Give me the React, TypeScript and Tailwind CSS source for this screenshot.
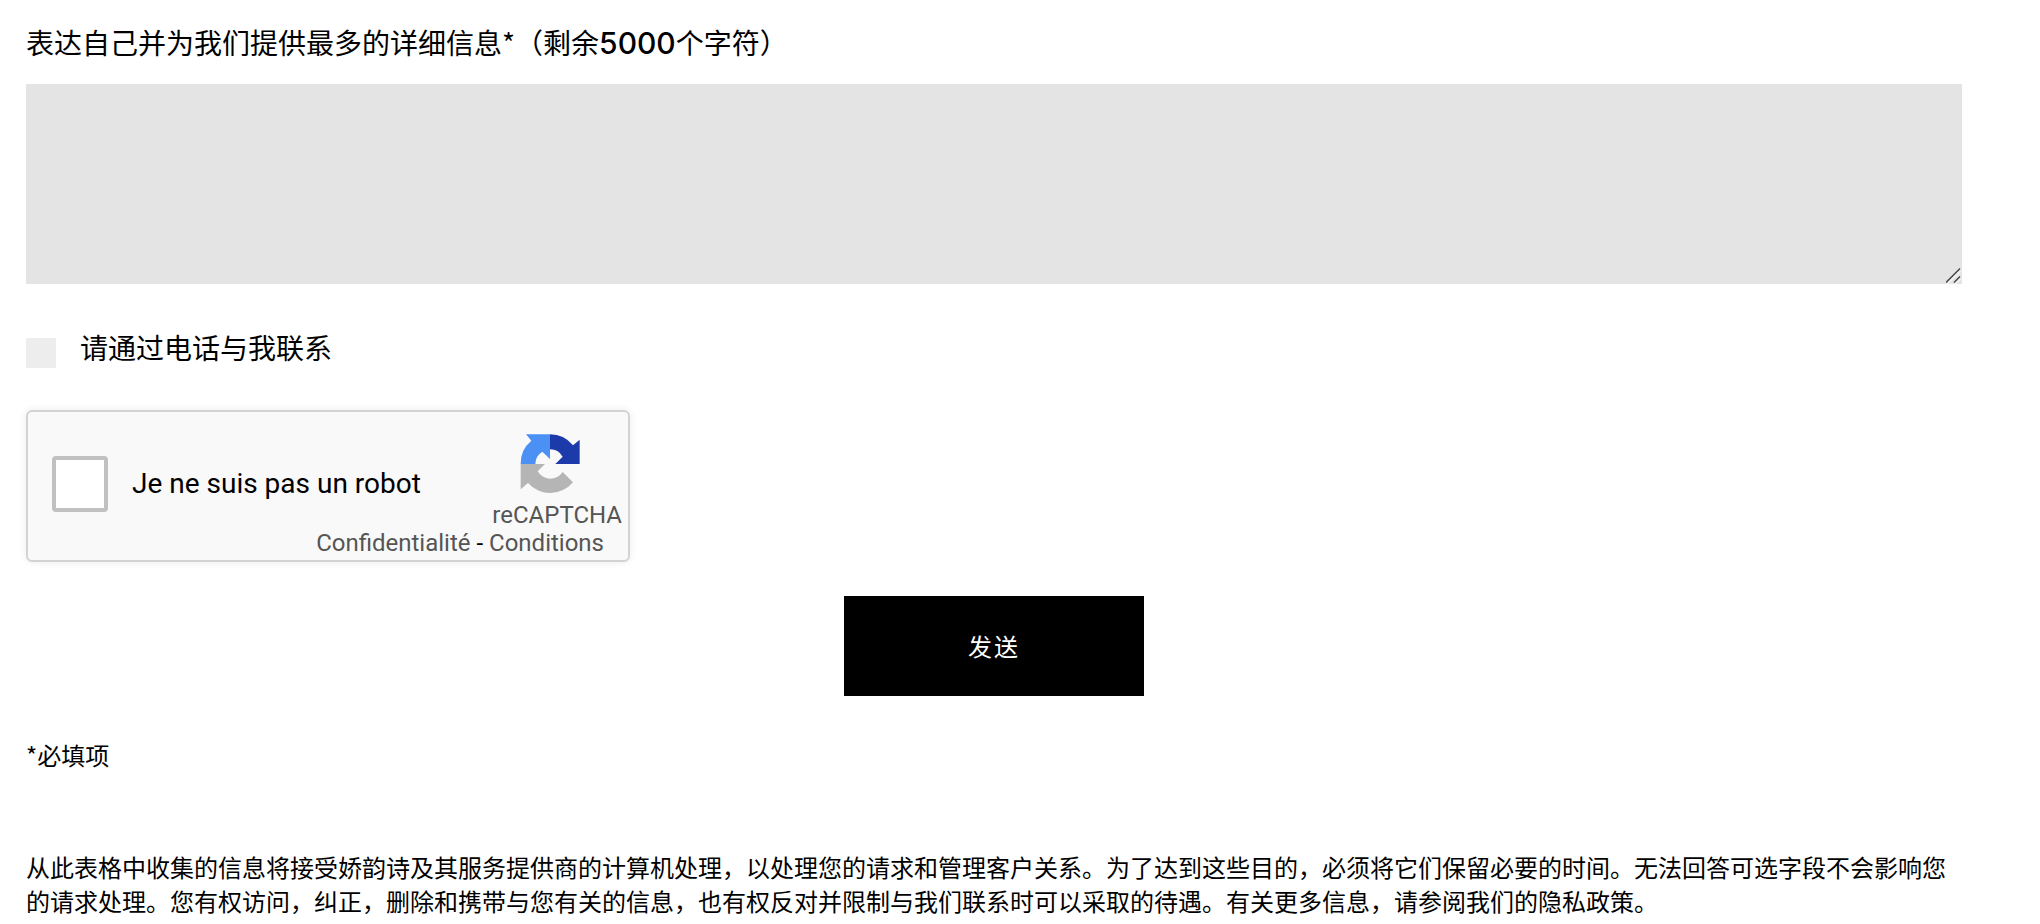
import React from 'react';

const RecaptchaLogo: React.FC = () => (
  <svg viewBox="0 0 180 180" className="w-[60px] h-[60px]" aria-hidden="true">
    <path d="M18 1H90V75L67 53A44 44 0 0 0 46 90H2A88 88 0 0 1 34 20Z" fill="#4a90f5" />
    <path d="M90 1A89 89 0 0 1 159 34L179 17V90H106L128 68A44 44 0 0 0 90 46Z" fill="#1c3aa9" />
    <path d="M2 90H75L53 112A44 44 0 0 0 128 114L159 145A89 89 0 0 1 24 147L2 166Z" fill="#b5b5b5" />
  </svg>
);

const Recaptcha: React.FC = () => (
  <div className="flex justify-between w-[604px] h-[152px] mt-[42px] pl-6 bg-[#f9f9f9] border-2 border-[#d3d3d3] rounded-md shadow-[0_0_8px_rgba(0,0,0,0.08)] font-[Roboto,sans-serif]">
    <div className="flex items-center gap-6 shrink-0 pb-1">
      <input
        id="robot"
        type="checkbox"
        className="appearance-none w-14 h-14 bg-white border-4 border-[#c1c1c1] rounded"
      />
      <label htmlFor="robot" className="text-[28px] leading-[34px] whitespace-nowrap">
        Je ne suis pas un robot
      </label>
    </div>
    <div className="flex flex-col items-end w-0 pt-[22px] text-2xl leading-7 text-[#555] whitespace-nowrap">
      <div className="flex flex-col items-start gap-[7px] pr-[6px]">
        <div className="pl-7">
          <RecaptchaLogo />
        </div>
        <div>reCAPTCHA</div>
      </div>
      <div className="pr-6">
        <a href="#privacy">Confidentialité</a>
        <span className="text-black"> - </span>
        <a href="#terms">Conditions</a>
      </div>
    </div>
  </div>
);

export default function App() {
  return (
    <main className="bg-white text-black pl-[26px] pr-[78px] pt-6 font-['Noto_Sans_CJK_SC',sans-serif]">
      <form onSubmit={(e) => e.preventDefault()}>
        {/* Message */}
        <label htmlFor="message" className="block h-[60px] text-[28px] leading-9">
          表达自己并为我们提供最多的详细信息*（剩余
          <span className="font-[Inter,sans-serif] text-[30px] font-medium">5000</span>
          个字符）
        </label>
        <div className="relative">
          <textarea
            id="message"
            className="block w-full h-[200px] p-4 bg-[#e4e4e4] text-2xl resize-none outline-none"
          />
          <svg
            viewBox="0 0 16 16"
            className="absolute right-0 bottom-0 w-4 h-4 pointer-events-none"
            fill="none"
            aria-hidden="true"
          >
            <path d="M1 15.5L15 1.5M9 15.5L15 9.5" stroke="#fff" transform="translate(0 1)" />
            <path d="M0 14.5L14 0.5M8 14.5L14 8.5" stroke="#444" strokeWidth="1.4" />
          </svg>
        </div>

        {/* Phone contact */}
        <div className="flex items-center gap-6 mt-[46px]">
          <input
            id="phone"
            type="checkbox"
            className="appearance-none w-[30px] h-[30px] mt-2 bg-[#ededed]"
          />
          <label htmlFor="phone" className="pb-1 text-[28px] leading-[34px]">
            请通过电话与我联系
          </label>
        </div>

        <Recaptcha />

        <button
          type="submit"
          className="block w-[300px] h-[100px] mt-[34px] mx-auto bg-black text-white text-2xl tracking-[2px]"
        >
          发送
        </button>
      </form>

      <p className="mt-[42px] text-2xl leading-[34px]">*必填项</p>
      <p className="mt-[78px] text-2xl leading-[34px]">
        从此表格中收集的信息将接受娇韵诗及其服务提供商的计算机处理，以处理您的请求和管理客户关系。为了达到这些目的，必须将它们保留必要的时间。无法回答可选字段不会影响您的请求处理。您有权访问，纠正，删除和携带与您有关的信息，也有权反对并限制与我们联系时可以采取的待遇。有关更多信息，请参阅我们的隐私政策。
      </p>
    </main>
  );
}
